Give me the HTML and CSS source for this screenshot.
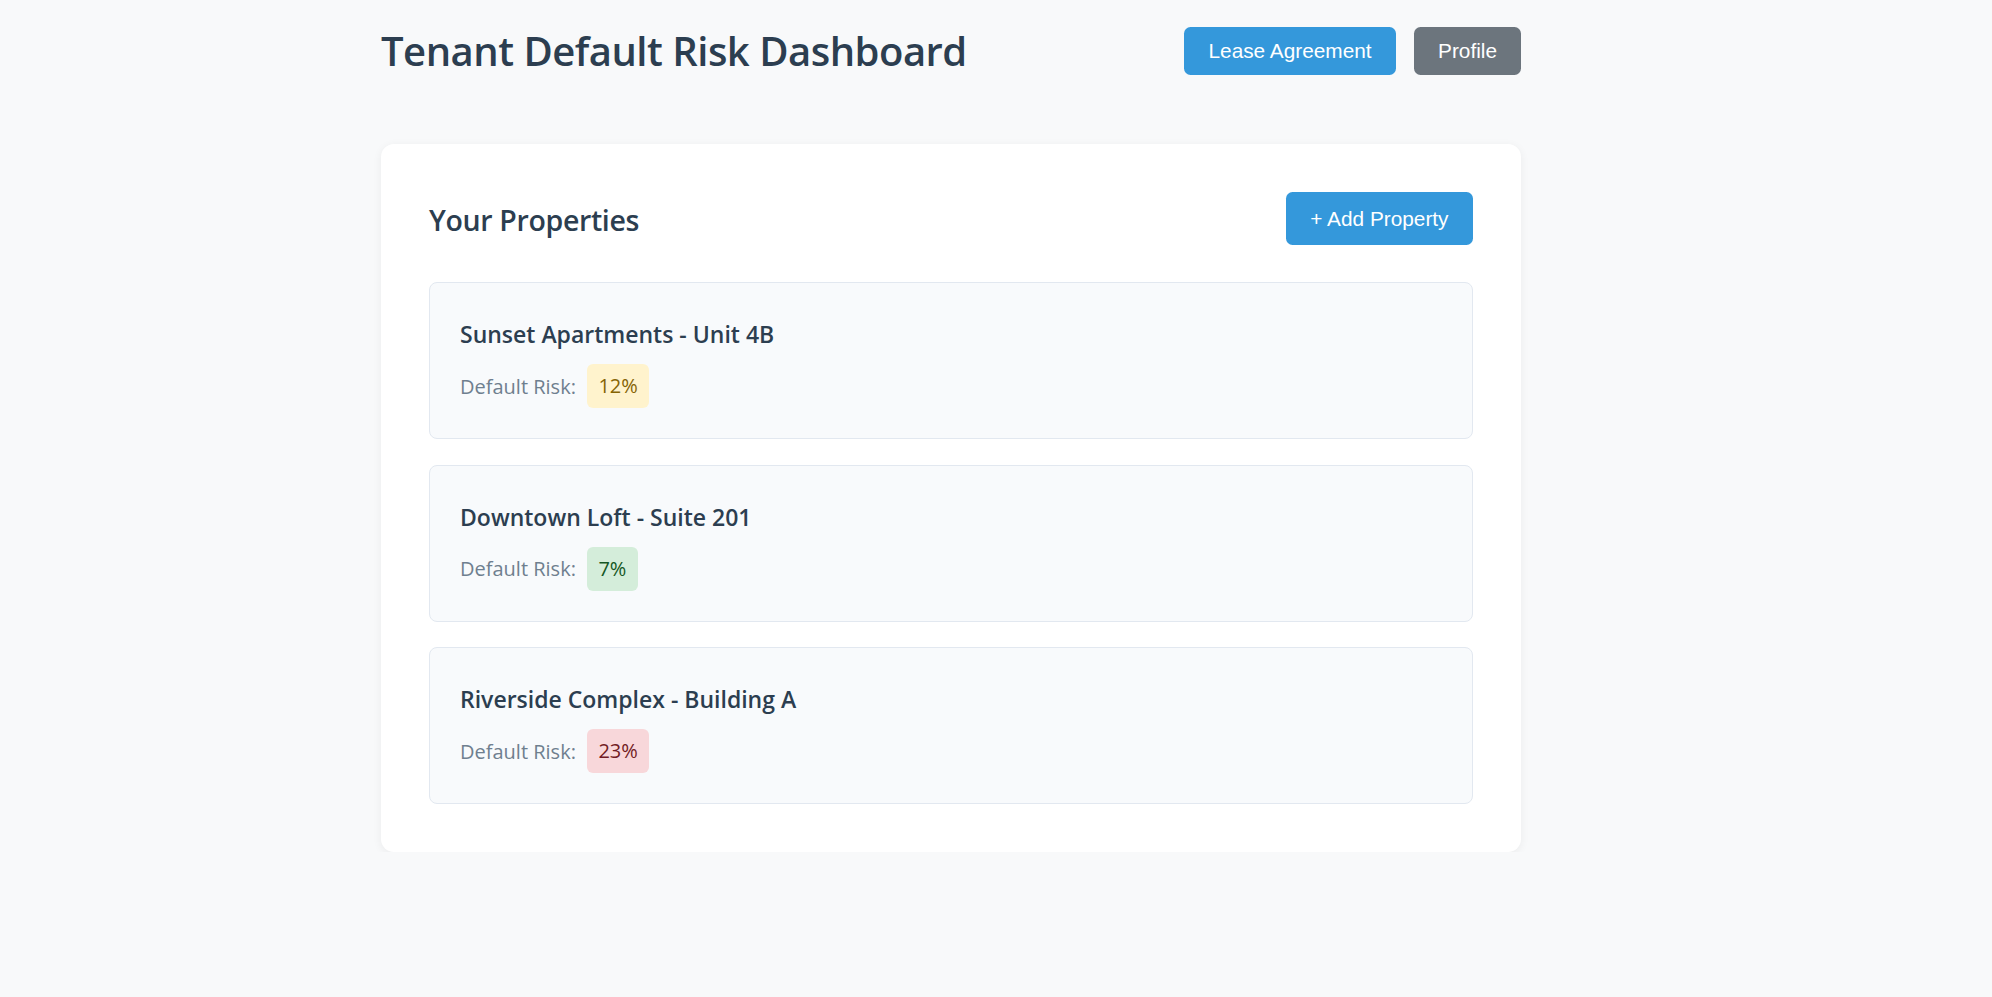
FILE: index.html
```html
<!DOCTYPE html>
<html lang="en">
<head>
<meta charset="utf-8">
<title>Tenant Default Risk Dashboard</title>
<link rel="stylesheet" href="styles.css">
</head>
<body>
<div class="container">
  <header class="top-bar">
    <h1 class="page-title">Tenant Default Risk Dashboard</h1>
    <nav class="top-actions">
      <button class="btn btn-primary">Lease Agreement</button>
      <button class="btn btn-secondary">Profile</button>
    </nav>
  </header>

  <section class="panel">
    <div class="panel-header">
      <h2 class="panel-title">Your Properties</h2>
      <button class="btn btn-primary btn-lg">+ Add Property</button>
    </div>
    <div class="property-list">
      <div class="property-card">
        <h3 class="property-name">Sunset Apartments - Unit 4B</h3>
        <div class="risk-row">
          <span class="risk-label">Default Risk:</span>
          <span class="risk-badge risk-medium">12%</span>
        </div>
      </div>
      <div class="property-card">
        <h3 class="property-name">Downtown Loft - Suite 201</h3>
        <div class="risk-row">
          <span class="risk-label">Default Risk:</span>
          <span class="risk-badge risk-low">7%</span>
        </div>
      </div>
      <div class="property-card">
        <h3 class="property-name">Riverside Complex - Building A</h3>
        <div class="risk-row">
          <span class="risk-label">Default Risk:</span>
          <span class="risk-badge risk-high">23%</span>
        </div>
      </div>
    </div>
  </section>
</div>
</body>
</html>
```

FILE: styles.css
```css
* {
  box-sizing: border-box;
}

body {
  margin: 0;
  background: #f8f9fa;
  font-family: "Open Sans", "Noto Sans", sans-serif;
  color: #2c3e50;
}

.container {
  width: 1140px;
  margin-left: 381px;
  padding-top: 27px;
}

.top-bar {
  display: flex;
  justify-content: space-between;
  align-items: center;
  margin-bottom: 69px;
}

.page-title {
  margin: 0;
  font-size: 40px;
  line-height: 48px;
  font-weight: 600;
  letter-spacing: -0.5px;
  color: #2c3e50;
}

.top-actions {
  display: flex;
  gap: 18px;
}

.btn {
  font-family: "Liberation Sans", Arial, sans-serif;
  font-size: 20.8px;
  line-height: 24px;
  padding: 12px 24px;
  border: none;
  border-radius: 6.5px;
  color: #ffffff;
  cursor: pointer;
}

.btn-primary {
  background: #3498db;
}

.btn-secondary {
  background: #6c757d;
}

.top-actions .btn-primary {
  padding: 12px 24.5px;
}

.btn-lg {
  padding: 14.5px 24.5px;
}

.panel {
  background: #ffffff;
  border-radius: 13px;
  padding: 48px;
  box-shadow: 0 2px 10px rgba(0, 0, 0, 0.06);
}

.panel-header {
  display: flex;
  justify-content: space-between;
  align-items: center;
  margin-bottom: 37px;
}

.panel-title {
  margin: 0;
  padding-top: 2px;
  font-size: 28.5px;
  line-height: 38px;
  font-weight: 600;
  letter-spacing: -0.35px;
  color: #2c3e50;
}

.property-list {
  display: flex;
  flex-direction: column;
  gap: 25.5px;
}

.property-card {
  background: #f8fafc;
  border: 1px solid #e2e8f0;
  border-radius: 8px;
  padding: 30px;
}

.property-name {
  margin: 0 0 12px;
  padding-top: 3px;
  font-size: 23px;
  line-height: 36px;
  font-weight: 600;
  color: #2c3e50;
}

.risk-row {
  display: flex;
  align-items: center;
  gap: 11px;
}

.risk-label {
  font-size: 20px;
  color: #6f7f8f;
}

.risk-badge {
  font-size: 20px;
  line-height: 32px;
  padding: 6px 11.5px;
  border-radius: 6px;
  font-weight: 400;
}

.risk-medium {
  background: #fff3cd;
  color: #856404;
}

.risk-low {
  background: #d4edda;
  color: #155724;
}

.risk-high {
  background: #f8d7da;
  color: #721c24;
}
```
